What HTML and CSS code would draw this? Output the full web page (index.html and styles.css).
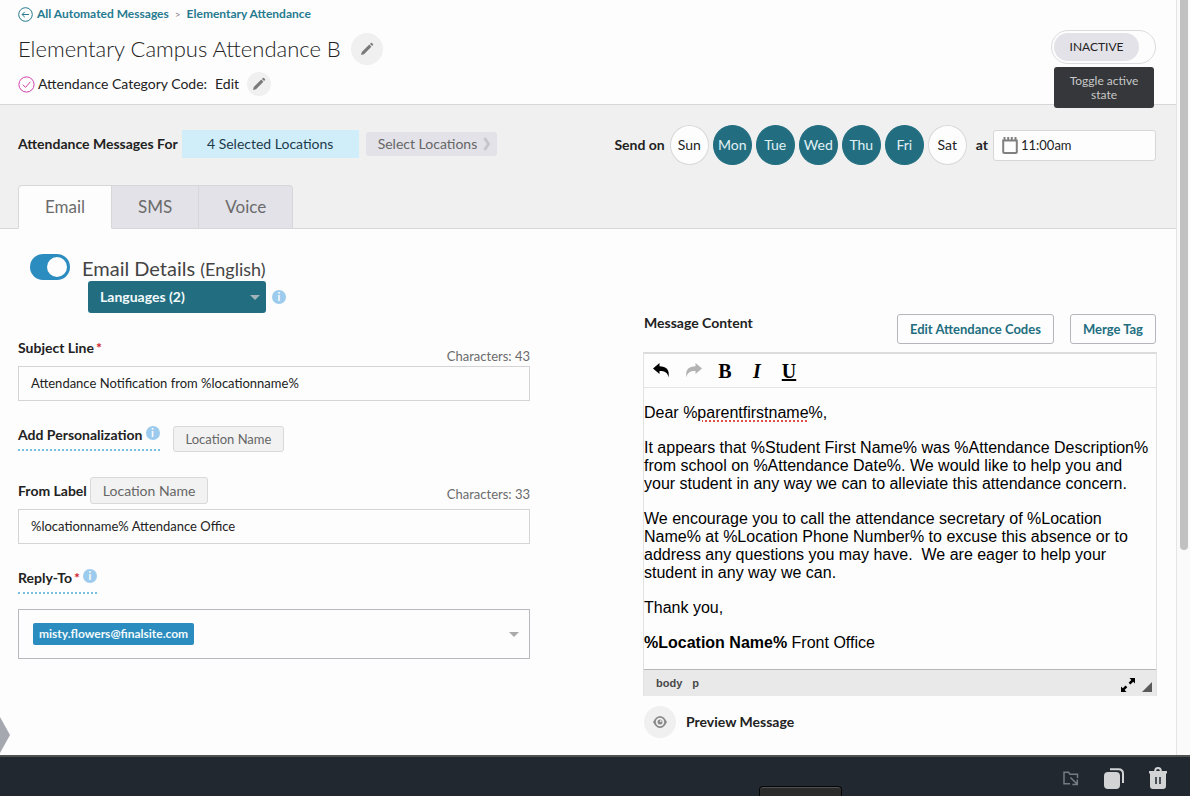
FILE: index.html
```
<!DOCTYPE html>
<html lang="en">
<head>
    <meta charset="UTF-8">
    <meta name="viewport" content="width=device-width, initial-scale=1.0">
    <title>Elementary Campus Attendance B</title>
    <link rel="stylesheet" href="styles.css">
</head>
<body>
    <div class="viewport">
        <main class="page">
            <header class="page-header">
                <div class="header-main">
                    <nav class="breadcrumb">
                        <svg width="15" height="15" viewBox="0 0 15 15" fill="none" stroke="#267a90">
                            <circle cx="7.5" cy="7.5" r="6.8" />
                            <path d="M11 7.5H4.2M6.8 4.8L4.1 7.5l2.7 2.7" />
                        </svg>
                        <a href="#">All Automated Messages</a>
                        <span class="separator">&gt;</span>
                        <a href="#">Elementary Attendance</a>
                    </nav>
                    <div class="title-row">
                        <h1>Elementary Campus Attendance B</h1>
                        <button class="round-button" type="button" aria-label="Edit title">
                            <svg width="14" height="14" viewBox="0 0 14 14" fill="#7a7a7a">
                                <path d="M1 13l.8-3L9.300 2.600l2.100 2.100L4 12.200zM10 1.900l.9-.9q.5-.4 1 0l1.100 1.100q.4.500 0 1l-.9.900z" />
                            </svg>
                        </button>
                    </div>
                    <div class="category-row">
                        <svg width="17" height="17" viewBox="0 0 17 17" fill="none" stroke="#d23fae">
                            <circle cx="8.5" cy="8.5" r="7.6" />
                            <path d="M4.8 8.6l2.7 2.8 4.8-5.6" />
                        </svg>
                        <span>Attendance Category Code:</span>
                        <span class="category-value">Edit</span>
                        <button class="round-button small" type="button" aria-label="Edit category code">
                            <svg width="14" height="14" viewBox="0 0 14 14" fill="#7a7a7a">
                                <path d="M1 13l.8-3L9.300 2.600l2.100 2.100L4 12.200zM10 1.900l.9-.9q.5-.4 1 0l1.100 1.100q.4.500 0 1l-.9.900z" />
                            </svg>
                        </button>
                    </div>
                </div>
                <div class="state">
                    <button class="state-toggle" type="button"><span>INACTIVE</span></button>
                    <div class="tooltip" role="tooltip">Toggle active state</div>
                </div>
            </header>

            <section class="schedule">
                <div class="schedule-row">
                    <div class="locations">
                        <strong>Attendance Messages For</strong>
                        <span class="selected-locations">4 Selected Locations</span>
                        <button class="select-locations" type="button">Select Locations
                            <svg width="8" height="14" viewBox="0 0 8 14" fill="none" stroke="#c6c6ca" stroke-width="3">
                                <path d="M1.5 1l4 6-4 6" />
                            </svg>
                        </button>
                    </div>
                    <div class="send-on">
                        <strong>Send on</strong>
                        <div class="days">
                            <button class="day" type="button">Sun</button>
                            <button class="day on" type="button">Mon</button>
                            <button class="day on" type="button">Tue</button>
                            <button class="day on" type="button">Wed</button>
                            <button class="day on" type="button">Thu</button>
                            <button class="day on" type="button">Fri</button>
                            <button class="day" type="button">Sat</button>
                        </div>
                        <label for="time">at</label>
                        <div class="time-box">
                            <svg width="16" height="17" viewBox="0 0 16 17" fill="none" stroke="#808080" stroke-width="2">
                                <path d="M1.2 3.5h13.6V15q0 1-1 1H2.2q-1 0-1-1z" />
                                <path d="M2.5 0v3M6.2 0v3M9.8 0v3M13.5 0v3" />
                            </svg>
                            <input id="time" type="text" value="11:00am">
                        </div>
                    </div>
                </div>
                <div class="tabs" role="tablist">
                    <button class="tab active" type="button" role="tab">Email</button>
                    <button class="tab" type="button" role="tab">SMS</button>
                    <button class="tab" type="button" role="tab">Voice</button>
                </div>
            </section>

            <section class="details">
                <div class="column">
                    <div class="details-title">
                        <input id="email-on" class="switch" type="checkbox" checked>
                        <label for="email-on">Email Details <small>(English)</small></label>
                    </div>
                    <div class="languages">
                        <select aria-label="Languages">
                            <option>Languages (2)</option>
                        </select>
                        <span class="info">i</span>
                    </div>

                    <div class="field-head subject-head">
                        <label for="subject">Subject Line<span class="required">*</span></label>
                        <span class="count">Characters: 43</span>
                    </div>
                    <input id="subject" class="text-input" type="text" value="Attendance Notification from %locationname%">

                    <div class="personalization">
                        <strong class="hinted">Add Personalization <span class="info">i</span></strong>
                        <button class="chip-button" type="button">Location Name</button>
                    </div>

                    <div class="field-head from-head">
                        <label for="from">From Label</label>
                        <button class="chip-button large" type="button">Location Name</button>
                        <span class="count">Characters: 33</span>
                    </div>
                    <input id="from" class="text-input" type="text" value="%locationname% Attendance Office">

                    <div class="reply-head">
                        <label class="hinted" for="reply">Reply-To<span class="required">*</span> <span class="info">i</span></label>
                    </div>
                    <button id="reply" class="reply-select" type="button" role="combobox" aria-expanded="false">
                        <span class="tag">misty.flowers@finalsite.com</span>
                        <span class="caret"></span>
                    </button>
                </div>

                <div class="column content-column">
                    <div class="content-head">
                        <strong>Message Content</strong>
                        <div class="content-actions">
                            <button class="outline-button" type="button">Edit Attendance Codes</button>
                            <button class="outline-button" type="button">Merge Tag</button>
                        </div>
                    </div>
                    <div class="editor">
                        <div class="toolbar">
                            <button type="button" aria-label="Undo">
                                <svg width="17" height="15" viewBox="0 0 17 15" fill="#000">
                                    <path d="M0 5.5L6.5 0v3.3C13 3.3 17 6.500 15.500 14.500 14.800 9.500 12 8 6.500 8v3z" />
                                </svg>
                            </button>
                            <button type="button" aria-label="Redo" disabled>
                                <svg width="17" height="15" viewBox="0 0 17 15" fill="#b3b3b3">
                                    <path d="M17 5.500L10.500 0v3.300C4 3.300 0 6.500 1.500 14.500 2.200 9.500 5 8 10.500 8v3z" />
                                </svg>
                            </button>
                            <button type="button"><b>B</b></button>
                            <button type="button"><i>I</i></button>
                            <button type="button"><u>U</u></button>
                        </div>
                        <div class="message" contenteditable="true" spellcheck="false">
                            <p>Dear %<span class="misspelled">parentfirstname</span>%,</p>
                            <p>It appears that %Student First Name% was %Attendance Description% from school on %Attendance Date%. We would like to help you and your student in any way we can to alleviate this attendance concern.</p>
                            <p>We encourage you to call the attendance secretary of %Location Name% at %Location Phone Number% to excuse this absence or to address any questions you may have.&nbsp; We are eager to help your student in any way we can.</p>
                            <p>Thank you,</p>
                            <p><b>%Location Name%</b> Front Office</p>
                        </div>
                        <div class="status-bar">
                            <span>body</span>
                            <span>p</span>
                            <div class="status-icons">
                                <svg width="14" height="14" viewBox="0 0 14 14" fill="#000">
                                    <path d="M14 0v5.500L12.200 3.800 9.400 6.600 7.600 4.800l2.700-2.700L8.500 0zM0 14V8.500l1.800 1.800 2.700-2.800 1.800 1.800-2.700 2.800L5.500 14z" />
                                </svg>
                                <svg width="10" height="10" viewBox="0 0 10 10" fill="#5a5a5a"><path d="M10 0v10H0z" /></svg>
                            </div>
                        </div>
                    </div>
                    <div class="preview">
                        <button id="preview" class="round-button" type="button">
                            <svg width="14" height="12" viewBox="0 0 14 12">
                                <path d="M0 6Q3 0 7 0t7 6q-3 6-7 6T0 6z" fill="#8a8a8a" />
                                <circle cx="7" cy="6" r="4.200" fill="#f0f0f0" />
                                <circle cx="7" cy="6" r="2.500" fill="#8a8a8a" />
                                <circle cx="7.800" cy="5.200" r=".9" fill="#f0f0f0" />
                            </svg>
                        </button>
                        <label for="preview">Preview Message</label>
                    </div>
                </div>
            </section>
            <div class="drawer-handle"></div>
        </main>
        <div class="scrollbar"><div class="thumb"></div></div>
    </div>

    <footer class="dock">
        <div class="dock-popup"></div>
        <button type="button" aria-label="Move to folder">
            <svg width="16" height="15" viewBox="0 0 16 15" fill="none" stroke="#747b81" stroke-width="1.500">
                <path d="M7 12.700H1V1.200h4.500l1.500 2h7.500V7M7.500 6.500l6.500 6.500M14.300 8.500v5h-5" />
            </svg>
        </button>
        <button type="button" aria-label="Duplicate">
            <svg width="20" height="21" viewBox="0 0 20 21">
                <path d="M6 1.200h8.500q4.500 0 4.500 4.500V15" fill="none" stroke="#d2d3d5" stroke-width="2" />
                <rect x="0" y="4" width="16" height="17" rx="4" fill="#d2d3d5" />
            </svg>
        </button>
        <button type="button" aria-label="Delete">
            <svg width="18" height="22" viewBox="0 0 18 22">
                <path d="M0 4h18v2.500h-1V19q0 3-3 3H4q-3 0-3-3V6.500H0z" fill="#d2d3d5" />
                <path d="M6.200 5V3.800a2.800 2.800 0 0 1 5.600 0V5" fill="none" stroke="#d2d3d5" stroke-width="2" />
                <path d="M7 10v7M11 10v7" stroke="#4b5157" stroke-width="2" />
            </svg>
        </button>
    </footer>
</body>
</html>
```

FILE: styles.css
```
* {
    box-sizing: border-box;
}

body {
    margin: 0;
    min-height: 100vh;
    display: flex;
    flex-direction: column;
    font-family: Lato, sans-serif;
    font-size: 14px;
    line-height: 18px;
    color: #222;
    background-color: #fdfdfd;
}

button,
input,
select {
    font: inherit;
    color: inherit;
    margin: 0;
}

button {
    padding: 0;
    border: 0;
    background: none;
    white-space: nowrap;
}

svg {
    display: block;
    flex: none;
}

.viewport {
    flex: 1;
    display: flex;
}

.page {
    position: relative;
    flex: 1;
    min-width: 0;
    border-right: 1px solid #e4e4e4;
}

.scrollbar {
    width: 13px;
    padding: 0 2px 0 3px;
    background-color: #fafafa;
}

.thumb {
    height: 550px;
    border-radius: 0 0 4px 4px;
    background-color: #c1c1c1;
}

/* Header */
.page-header {
    display: flex;
    justify-content: space-between;
    padding: 5px 20px 8px 18px;
    border-bottom: 1px solid #d6d7d9;
}

.breadcrumb {
    display: flex;
    align-items: center;
    gap: 4px;
    font-size: 12px;
    font-weight: bold;
}

.breadcrumb a {
    color: #267a90;
    text-decoration: none;
}

.separator {
    margin: 0 2px;
    font-size: 10px;
    font-weight: normal;
    color: #888;
}

.title-row {
    display: flex;
    align-items: center;
    gap: 10px;
    margin-top: 10px;
}

h1 {
    margin: 0;
    font-size: 22px;
    font-weight: 300;
    line-height: 28px;
}

.round-button {
    display: flex;
    align-items: center;
    justify-content: center;
    width: 32px;
    height: 32px;
    border-radius: 50%;
    background-color: #f0f0f0;
}

.round-button.small {
    width: 24px;
    height: 24px;
}

.category-row {
    display: flex;
    align-items: center;
    gap: 3px;
    margin-top: 7px;
}

.category-value {
    margin: 0 5px;
}

.state {
    position: relative;
    margin-top: 25px;
}

.state-toggle {
    display: block;
    width: 105px;
    height: 34px;
    padding: 2px;
    border: 1px solid #dcdce0;
    border-radius: 17px;
    text-align: left;
    font-size: 12px;
}

.state-toggle span {
    display: block;
    width: 85px;
    border-radius: 14px;
    line-height: 28px;
    text-align: center;
    background-color: #e2e2e8;
}

.tooltip {
    position: absolute;
    top: 37px;
    right: 2px;
    width: 100px;
    padding: 7px 12px 6px;
    border-radius: 3px;
    font-size: 12px;
    line-height: 14px;
    text-align: center;
    color: #c8c8c8;
    background-color: #35373a;
}

/* Schedule band */
.schedule {
    padding: 20px 20px 0 18px;
    background-color: #f0f0f0;
    border-bottom: 1px solid #d6d7d9;
}

.schedule-row,
.locations,
.send-on {
    display: flex;
    align-items: center;
}

.schedule-row {
    justify-content: space-between;
}

.locations {
    padding-bottom: 2px;
}

.selected-locations {
    width: 177px;
    margin: 0 7px 0 4px;
    line-height: 28px;
    text-align: center;
    color: #1d3a4c;
    background-color: #d0eefa;
}

.select-locations {
    display: flex;
    align-items: center;
    justify-content: space-between;
    width: 131px;
    height: 24px;
    padding: 0 6px 0 12px;
    border-radius: 3px;
    color: #666;
    background-color: #e2e2e8;
}

.days {
    display: flex;
    gap: 4px;
    margin: 0 9px 0 5px;
}

.day {
    width: 39px;
    height: 40px;
    border: 1px solid #d9d9d9;
    border-radius: 50%;
    background-color: #fdfdfd;
}

.day.on {
    border-color: #226e80;
    color: #e0f1f4;
    background-color: #226e80;
}

.send-on label {
    font-weight: bold;
}

.time-box {
    display: flex;
    align-items: center;
    width: 163px;
    height: 31px;
    margin-left: 5px;
    padding-left: 8px;
    border: 1px solid #d6d7d9;
    border-radius: 3px;
    background-color: #fdfdfd;
}

.time-box input {
    flex: 1;
    min-width: 0;
    padding: 0 3px;
    border: 0;
    background: none;
    font-size: 13px;
}

.tabs {
    display: flex;
    margin: 20px 0 -1px;
}

.tab {
    height: 44px;
    padding: 0 26px;
    border: 1px solid #d6d7d9;
    border-left-width: 0;
    font-size: 17px;
    color: #6b6b6b;
    background-color: #e2e2e8;
}

.tab:first-child {
    border-left-width: 1px;
    border-radius: 4px 0 0 0;
}

.tab:last-child {
    border-radius: 0 4px 0 0;
}

.tab.active {
    border-bottom-color: #fdfdfd;
    background-color: #fdfdfd;
}

/* Email details */
.details {
    display: grid;
    grid-template-columns: 1fr 1fr;
    gap: 114px;
    padding: 25px 20px 16px 18px;
}

.column {
    min-width: 0;
}

.details-title {
    display: flex;
    align-items: flex-start;
    gap: 12px;
    height: 27px;
    padding-left: 12px;
    font-size: 20px;
    line-height: 28px;
    color: #444;
}

.details-title small {
    font-size: 18px;
}

.switch {
    appearance: none;
    width: 40px;
    height: 26px;
    padding: 3px;
    border-radius: 13px;
    background-color: #2b8cbf;
}

.switch::before {
    content: "";
    display: block;
    width: 20px;
    height: 20px;
    margin-left: auto;
    border-radius: 50%;
    background-color: #fdfdfd;
}

.languages {
    position: relative;
    display: flex;
    align-items: center;
    gap: 6px;
    padding-left: 70px;
}

.languages select {
    appearance: none;
    width: 178px;
    height: 32px;
    padding: 0 12px;
    border: 0;
    border-radius: 3px;
    font-weight: bold;
    color: #f2fafb;
    background-color: #226e80;
}

.languages::before {
    content: "";
    position: absolute;
    left: 232px;
    border: 5px solid transparent;
    border-top-color: #a3b3b8;
    border-bottom-width: 0;
}

.info {
    display: inline-block;
    width: 14px;
    height: 14px;
    border-radius: 50%;
    font-size: 11px;
    font-weight: bold;
    line-height: 14px;
    text-align: center;
    color: #fdfdfd;
    background-color: #9ccbed;
}

.field-head {
    display: flex;
    align-items: center;
}

.subject-head {
    margin-top: 26px;
    height: 27px;
    align-items: flex-start;
}

.field-head label,
.reply-head label,
.preview label,
.personalization strong,
.content-head strong {
    font-size: 14px;
    font-weight: bold;
}

.count {
    align-self: flex-end;
    margin-left: auto;
    padding-bottom: 1px;
    font-size: 13px;
    color: #6b6b6b;
}

.required {
    margin-left: 2px;
    color: #d0212b;
}

.text-input {
    display: block;
    width: 100%;
    height: 35px;
    padding: 0 12px 2px;
    border: 1px solid #d4d4d6;
    border-radius: 0;
    font-size: 13px;
    background-color: #fdfdfd;
}

.personalization {
    display: flex;
    gap: 13px;
    margin-top: 25px;
}

.hinted {
    display: flex;
    gap: 3px;
    height: 25px;
    border-bottom: 2px dotted #77bfe0;
}

.hinted .required {
    margin-left: -1px;
}

.chip-button {
    height: 26px;
    padding: 0 12px;
    border: 1px solid #d9d9d9;
    border-radius: 3px;
    font-size: 13px;
    color: #666;
    background-color: #f2f2f2;
}

.chip-button.large {
    height: 27px;
    margin-left: 3px;
    font-size: 14px;
}

.from-head {
    margin: 25px 0 5px;
}

.reply-head {
    display: flex;
    margin: 25px 0 15px;
}

.reply-select {
    display: flex;
    align-items: center;
    justify-content: space-between;
    width: 100%;
    height: 50px;
    padding: 0 10px 0 14px;
    border: 1px solid #b8b9be;
}

.tag {
    padding: 0 6px;
    border-radius: 2px;
    font-size: 12px;
    font-weight: bold;
    line-height: 22px;
    color: #f2fafb;
    background-color: #2b8cbf;
}

.caret {
    border: 5px solid transparent;
    border-top-color: #aaa;
    border-bottom-width: 0;
}

/* Message content */
.content-column {
    padding-top: 60px;
}

.content-head {
    display: flex;
    justify-content: space-between;
}

.content-actions {
    display: flex;
    gap: 16px;
}

.outline-button {
    height: 30px;
    padding: 0 12px;
    border: 1px solid #b4b6bc;
    border-radius: 3px;
    font-size: 13px;
    font-weight: bold;
    color: #226e80;
}

.editor {
    margin: 8px -1px 0;
    border: 1px solid #e2e2e2;
    border-top: 2px solid #dcdcdc;
    border-bottom: 0;
}

.toolbar {
    display: flex;
    align-items: center;
    height: 34px;
    padding-left: 1px;
    border-bottom: 1px solid #e4e4e4;
}

.toolbar button {
    display: flex;
    justify-content: center;
    width: 32px;
    font-family: "Liberation Serif", serif;
    font-size: 20px;
    font-weight: bold;
    color: #000;
}

.message {
    padding-top: 16px;
    font-family: "Liberation Sans", sans-serif;
    font-size: 16px;
    line-height: 18px;
    color: #000;
}

.message p {
    margin: 0 0 17px;
}

.misspelled {
    text-decoration: underline dotted #e0504a 2px;
    text-underline-offset: 2px;
}

.status-bar {
    display: flex;
    align-items: center;
    gap: 10px;
    height: 27px;
    padding: 0 4px 0 12px;
    border-top: 1px solid #b5b5b5;
    font-family: "Liberation Sans", sans-serif;
    font-size: 11px;
    font-weight: bold;
    color: #484848;
    background-color: #e9e9e9;
}

.status-icons {
    display: flex;
    align-items: flex-end;
    gap: 7px;
    margin-left: auto;
    padding-top: 4px;
}

.preview {
    display: flex;
    align-items: center;
    gap: 10px;
    margin-top: 10px;
}

.drawer-handle {
    position: absolute;
    left: 0;
    bottom: 2px;
    width: 10px;
    height: 36px;
    clip-path: polygon(0 0, 100% 50%, 0 100%);
    background-color: #a6a8b0;
}

/* Bottom dock */
.dock {
    position: relative;
    display: flex;
    align-items: center;
    justify-content: flex-end;
    gap: 25px;
    height: 41px;
    padding: 3px 23px 0;
    border-top: 2px solid #505252;
    background-color: #222830;
}

.dock-popup {
    position: absolute;
    left: 759px;
    bottom: 0;
    width: 83px;
    height: 10px;
    border: 1px solid #050505;
    border-bottom: 0;
    border-radius: 4px 4px 0 0;
    background-color: #2c2b2c;
    box-shadow: inset 0 1px #505050;
}
```
